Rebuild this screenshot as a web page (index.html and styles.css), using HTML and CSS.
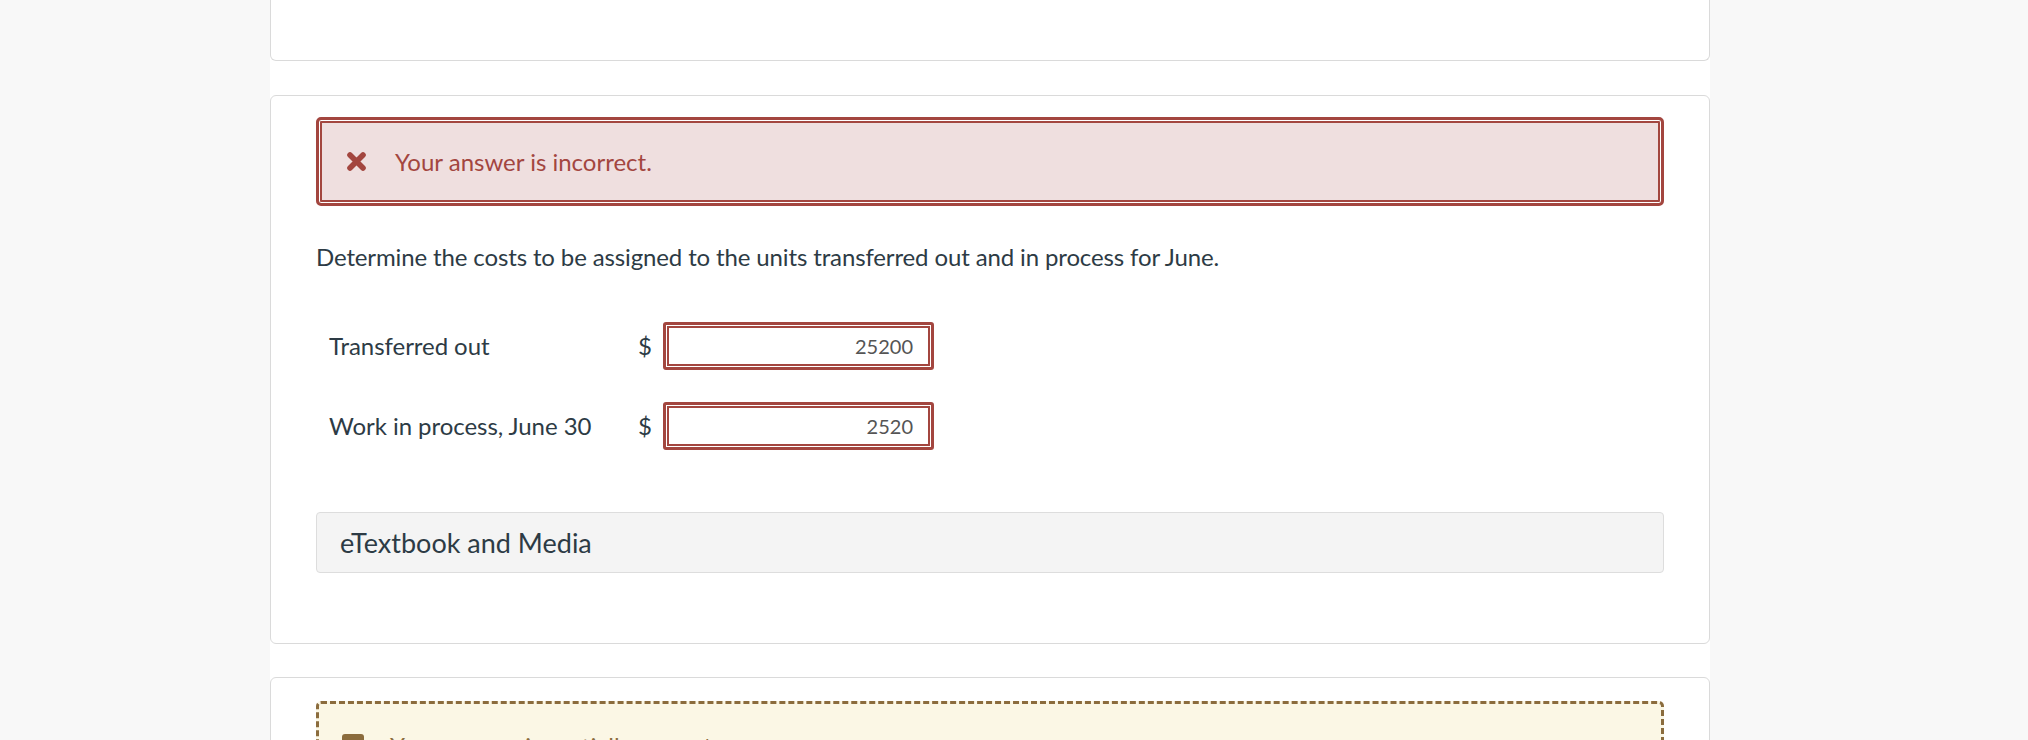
FILE: index.html
```html
<!DOCTYPE html>
<html lang="en">
<head>
<meta charset="utf-8">
<title>Question feedback</title>
<link rel="stylesheet" href="styles.css">
</head>
<body>
<main class="column">
  <section class="card card-top"></section>

  <section class="card">
    <div class="alert alert-incorrect">
      <svg class="alert-icon" viewBox="0 0 21 21" aria-hidden="true">
        <path d="M4 4 L17 17 M17 4 L4 17" stroke="#a3463f" stroke-width="5.6" stroke-linecap="round" fill="none"/>
      </svg>
      <span class="alert-text">Your answer is incorrect.</span>
    </div>

    <p class="question">Determine the costs to be assigned to the units transferred out and in process for June.</p>

    <div class="answers">
      <span class="label">Transferred out</span>
      <span class="currency">$</span>
      <div class="input incorrect"><span class="value">25200</span></div>

      <span class="label">Work in process, June 30</span>
      <span class="currency">$</span>
      <div class="input incorrect"><span class="value">2520</span></div>
    </div>

    <div class="media">eTextbook and Media</div>
  </section>

  <section class="card card-next">
    <div class="alert alert-partial">
      <svg class="alert-icon partial-icon" viewBox="0 0 22 22" aria-hidden="true">
        <rect x="0" y="0" width="22" height="22" rx="3" fill="#8b6c3d"/>
        <rect x="5" y="9.5" width="12" height="3" fill="#fbf7e5"/>
      </svg>
      <span class="alert-text">Your answer is partially correct.</span>
    </div>
  </section>
</main>
</body>
</html>
```

FILE: styles.css
```css
html, body {
  margin: 0;
  padding: 0;
}

body {
  background: #f8f8f8;
  font-family: Lato, "Liberation Sans", sans-serif;
  color: #2d3b45;
  overflow: hidden;
}

.column {
  width: 1440px;
  margin-left: 270px;
  background: #ffffff;
  min-height: 740px;
  display: flex;
  flex-direction: column;
  gap: 34px;
}

.card {
  box-sizing: border-box;
  border: 1px solid #dadada;
  border-radius: 6px;
  background: #ffffff;
  padding: 21px 45px 70px;
}

.card-top {
  height: 61px;
  border-top: 0;
  border-radius: 0 0 6px 6px;
  padding: 0;
}

.card-next {
  padding-top: 23px;
  margin-top: -1px;
}

.alert {
  box-sizing: border-box;
  height: 89px;
  display: flex;
  align-items: center;
  border-radius: 5px;
  font-size: 24px;
}

.alert-incorrect {
  background: #efdfdf;
  border: 3px solid #a3463f;
  box-shadow: inset 0 0 0 1px #ffffff, inset 0 0 0 3px #a3463f;
  color: #a3463f;
  padding-left: 27px;
}

.alert-partial {
  background: #fbf7e5;
  border: 3px dashed #8b6c3d;
  color: #8b6c3d;
  padding-left: 23px;
}

.alert-icon {
  width: 21px;
  height: 21px;
  flex: none;
  margin-right: 28px;
}

.partial-icon {
  width: 22px;
  height: 22px;
  margin-right: 26px;
  margin-top: -2px;
}

.alert-text {
  line-height: 1;
}

.question {
  margin: 33px 0 0;
  font-size: 24px;
  line-height: 36px;
  letter-spacing: -0.13px;
}

.answers {
  display: grid;
  grid-template-columns: 309px 25px 271px;
  row-gap: 32px;
  align-items: center;
  padding-left: 13px;
  margin-top: 47px;
}

.label {
  font-size: 24px;
  line-height: 30px;
  letter-spacing: -0.05px;
}

.currency {
  font-size: 24px;
  line-height: 30px;
}

.input {
  box-sizing: border-box;
  height: 48px;
  border-radius: 3px;
  background: #ffffff;
  display: flex;
  align-items: center;
  justify-content: flex-end;
  padding-right: 18px;
  font-size: 20px;
  color: #555555;
}

.input.incorrect {
  border: 3px solid #a3463f;
  box-shadow: inset 0 0 0 1px #ffffff, inset 0 0 0 3px #a3463f;
}

.media {
  box-sizing: border-box;
  margin-top: 62px;
  height: 61px;
  border: 1px solid #dddddd;
  border-radius: 4px;
  background: #f4f4f4;
  display: flex;
  align-items: center;
  padding-left: 23px;
  font-size: 27px;
  color: #2d3b45;
}
```
